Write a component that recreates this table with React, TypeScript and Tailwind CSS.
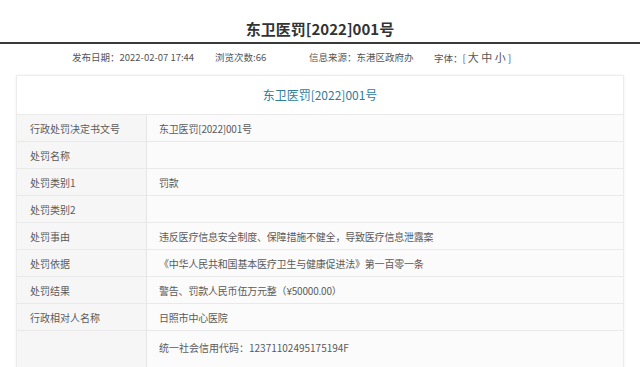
const rows: [string, string][] = [
  ["行政处罚决定书文号", "东卫医罚[2022]001号"],
  ["处罚名称", ""],
  ["处罚类别1", "罚款"],
  ["处罚类别2", ""],
  ["处罚事由", "违反医疗信息安全制度、保障措施不健全，导致医疗信息泄露案"],
  ["处罚依据", "《中华人民共和国基本医疗卫生与健康促进法》第一百零一条"],
  ["处罚结果", "警告、罚款人民币伍万元整（¥50000.00）"],
  ["行政相对人名称", "日照市中心医院"],
];

const font = "font-['Microsoft_YaHei','Noto_Sans_CJK_SC',sans-serif]";

export default function App() {
  return (
    <div className={`w-[640px] h-[367px] overflow-hidden bg-white text-[#555] ${font}`}>
      <div className="h-[44px] border-b-2 border-[#3a3a3a] flex items-end justify-center pb-[6px]">
        <h1 className="text-[15px] font-bold text-[#333] leading-none">东卫医罚[2022]001号</h1>
      </div>

      <div className="h-[26px] flex items-center pl-[72px] text-[9.5px] text-[#555]">
        <span className="w-[143px]">发布日期：2022-02-07 17:44</span>
        <span className="w-[94px]">浏览次数:66</span>
        <span className="w-[125px]">信息来源：东港区政府办</span>
        <span>
          字体：[ <span className="text-[11px]">大 中 小</span> ]
        </span>
      </div>

      <div className="mx-[16px] mt-[5px] border border-[#ececec] shadow-[0_0_3px_rgba(0,0,0,0.06)]">
        <div className="h-[38px] flex items-center justify-center text-[12px] text-[#2f7d9a] bg-white">
          东卫医罚[2022]001号
        </div>
        {rows.map(([label, value]) => (
          <div key={label} className="flex h-[27px] border-t border-[#e9e9e9] text-[10px] text-[#5a5a5a]">
            <div className="w-[130px] shrink-0 bg-[#f6f6f6] border-r border-[#e6e6e6] pl-[13px] flex items-center">
              {label}
            </div>
            <div className="flex-1 bg-[#fbfbfb] pl-[12px] flex items-center tracking-[-0.2px]">{value}</div>
          </div>
        ))}
        <div className="flex h-[60px] border-t border-[#e9e9e9] text-[10px] text-[#5a5a5a]">
          <div className="w-[130px] shrink-0 bg-[#f6f6f6] border-r border-[#e6e6e6]" />
          <div className="flex-1 bg-[#fbfbfb] pl-[12px] pt-[9px]">统一社会信用代码：12371102495175194F</div>
        </div>
      </div>
    </div>
  );
}
